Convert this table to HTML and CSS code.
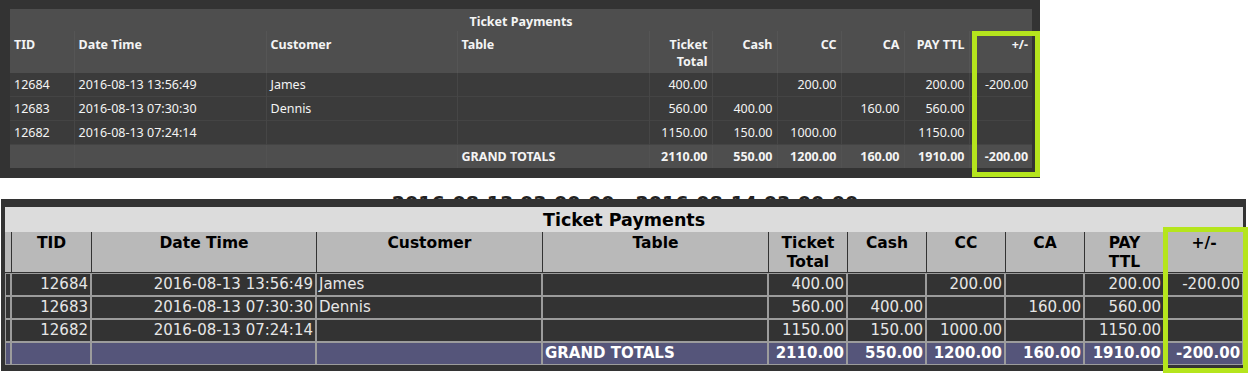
FILE: index.html
```html
<!DOCTYPE html>
<html>
<head>
<meta charset="utf-8">
<link rel="stylesheet" href="styles.css">
</head>
<body>
<div class="page">
  <section class="dark-panel">
    <table class="t1">
      <colgroup>
        <col class="w64"><col class="w192"><col class="w191"><col class="w192">
        <col class="w63"><col class="w65"><col class="w64"><col class="w63"><col class="w65"><col class="w63">
      </colgroup>
      <thead>
        <tr><th colspan="10" class="title">Ticket Payments</th></tr>
        <tr class="heads">
          <th class="l">TID</th><th class="l">Date Time</th><th class="l">Customer</th><th class="l">Table</th>
          <th class="r">Ticket<br>Total</th><th class="r">Cash</th><th class="r">CC</th><th class="r">CA</th><th class="r">PAY TTL</th><th class="r">+/-</th>
        </tr>
      </thead>
      <tbody>
        <tr><td>12684</td><td>2016-08-13 13:56:49</td><td>James</td><td></td><td class="r">400.00</td><td class="r"></td><td class="r">200.00</td><td class="r"></td><td class="r">200.00</td><td class="r">-200.00</td></tr>
        <tr><td>12683</td><td>2016-08-13 07:30:30</td><td>Dennis</td><td></td><td class="r">560.00</td><td class="r">400.00</td><td class="r"></td><td class="r">160.00</td><td class="r">560.00</td><td class="r"></td></tr>
        <tr><td>12682</td><td>2016-08-13 07:24:14</td><td></td><td></td><td class="r">1150.00</td><td class="r">150.00</td><td class="r">1000.00</td><td class="r"></td><td class="r">1150.00</td><td class="r"></td></tr>
      </tbody>
      <tfoot>
        <tr><td></td><td></td><td></td><td>GRAND TOTALS</td><td class="r">2110.00</td><td class="r">550.00</td><td class="r">1200.00</td><td class="r">160.00</td><td class="r">1910.00</td><td class="r">-200.00</td></tr>
      </tfoot>
    </table>
  </section>

  <div class="range"><span>2016-08-13 03:00:00 - 2016-08-14 03:00:00</span></div>

  <section class="light-panel">
    <table class="t2">
      <colgroup>
        <col class="c6"><col class="c80"><col class="c225"><col class="c226"><col class="c226">
        <col class="c79"><col class="c79"><col class="c79"><col class="c79"><col class="c80"><col class="c79">
      </colgroup>
      <thead>
        <tr><th colspan="11" class="title2">Ticket Payments</th></tr>
        <tr class="heads2">
          <th></th><th>TID</th><th>Date Time</th><th>Customer</th><th>Table</th>
          <th>Ticket<br>Total</th><th>Cash</th><th>CC</th><th>CA</th><th>PAY<br>TTL</th><th>+/-</th>
        </tr>
      </thead>
      <tbody>
        <tr><td></td><td class="r">12684</td><td class="r">2016-08-13 13:56:49</td><td>James</td><td></td><td class="r">400.00</td><td></td><td class="r">200.00</td><td></td><td class="r">200.00</td><td class="r">-200.00</td></tr>
        <tr><td></td><td class="r">12683</td><td class="r">2016-08-13 07:30:30</td><td>Dennis</td><td></td><td class="r">560.00</td><td class="r">400.00</td><td></td><td class="r">160.00</td><td class="r">560.00</td><td></td></tr>
        <tr><td></td><td class="r">12682</td><td class="r">2016-08-13 07:24:14</td><td></td><td></td><td class="r">1150.00</td><td class="r">150.00</td><td class="r">1000.00</td><td></td><td class="r">1150.00</td><td></td></tr>
      </tbody>
      <tfoot>
        <tr><td></td><td></td><td></td><td></td><td>GRAND TOTALS</td><td class="r">2110.00</td><td class="r">550.00</td><td class="r">1200.00</td><td class="r">160.00</td><td class="r">1910.00</td><td class="r">-200.00</td></tr>
      </tfoot>
    </table>
  </section>

  <div class="hl hl-top"></div>
  <div class="hl hl-bottom"></div>
</div>
</body>
</html>
```

FILE: styles.css
```css
html, body { margin: 0; padding: 0; background: #ffffff; }
.page { position: relative; width: 1250px; height: 376px; overflow: hidden; }

/* ---------- top (dark theme) ---------- */
.dark-panel {
  width: 1040px; height: 178px; box-sizing: border-box;
  background: #333333; padding: 9px 0 0 10px;
}
.t1 {
  width: 1022px; table-layout: fixed; border-collapse: collapse;
  font-family: "Noto Sans", "Open Sans", sans-serif; font-size: 12.5px; color: #f4f4f4;
}
.t1 .w64 { width: 64px; } .t1 .w192 { width: 192px; } .t1 .w191 { width: 191px; }
.t1 .w63 { width: 63px; } .t1 .w65 { width: 65px; }
.t1 th, .t1 td { padding: 3px 4px; line-height: 17px; white-space: nowrap; overflow: hidden; }
.t1 th { font-weight: 700; background: #4e4e4e; vertical-align: top; }
.t1 .title { text-align: center; padding: 4px 4px 1px; }
.t1 .heads th { padding: 5px 4px 3px; border-left: 1px solid #555555; }
.t1 .heads th:first-child { border-left: none; }
.t1 .l { text-align: left; }
.t1 .r { text-align: right; }
.t1 tbody td { background: #3b3b3b; border-left: 1px solid #464646; }
.t1 tbody tr + tr td { border-top: 1px solid #444444; }
.t1 tbody td:first-child { border-left: none; }
.t1 tfoot td { background: #4e4e4e; font-weight: 700; border-top: 1px solid #444444; border-left: 1px solid #525252; }
.t1 tfoot td:first-child { border-left: none; }

/* ---------- range heading (mostly hidden behind the panel) ---------- */
.range {
  height: 21px; overflow: hidden; display: flex; justify-content: center; align-items: flex-end;
  font-family: "DejaVu Sans", Verdana, sans-serif; font-weight: 700; font-size: 19px; color: #222;
}
.range span { display: block; line-height: 19px; margin-bottom: -14px; }

/* ---------- bottom (classic) ---------- */
.light-panel {
  margin-left: 1px; width: 1245px; height: 172px; box-sizing: border-box;
  background: #333333; padding: 8px 3px 7px 4px;
}
.t2 {
  width: 1238px; table-layout: fixed; border-collapse: separate; border-spacing: 0;
  font-family: "DejaVu Sans", Verdana, sans-serif; font-size: 15px; color: #e6e6e6;
}
.t2 .c6 { width: 6px; } .t2 .c80 { width: 80px; } .t2 .c79 { width: 79px; }
.t2 .c225 { width: 225px; } .t2 .c226 { width: 226px; }
.t2 th, .t2 td { padding: 0 2px; white-space: nowrap; overflow: hidden; }
.t2 .title2 {
  background: #dcdcdc; color: #000; font-size: 17.5px; font-weight: 700;
  height: 23px; line-height: 23px; text-align: center; padding: 2px 0 0;
  vertical-align: top;
}
.t2 .heads2 th {
  background: #b9b9b9; color: #000; font-weight: 700; font-size: 15.5px; line-height: 19px;
  vertical-align: top; text-align: center; height: 38px; padding: 2px 2px 0;
  border-left: 1px solid #333333; border-bottom: 1px solid #333333;
}
.t2 .heads2 th:first-child { border-left: none; }
.t2 td {
  background: #333333; height: 21px; line-height: 21px;
  border: 1px solid #9c9c9c;
}
.t2 .r { text-align: right; }
.t2 tfoot td { background: #55557a; color: #ffffff; font-weight: 700; }

/* ---------- highlight boxes (overlays) ---------- */
.hl { position: absolute; border: 5px solid #b5e51d; box-sizing: border-box; }
.hl-top { left: 972px; top: 31px; width: 68px; height: 146px; }
.hl-bottom { left: 1163px; top: 227px; width: 85px; height: 146px; }
```
